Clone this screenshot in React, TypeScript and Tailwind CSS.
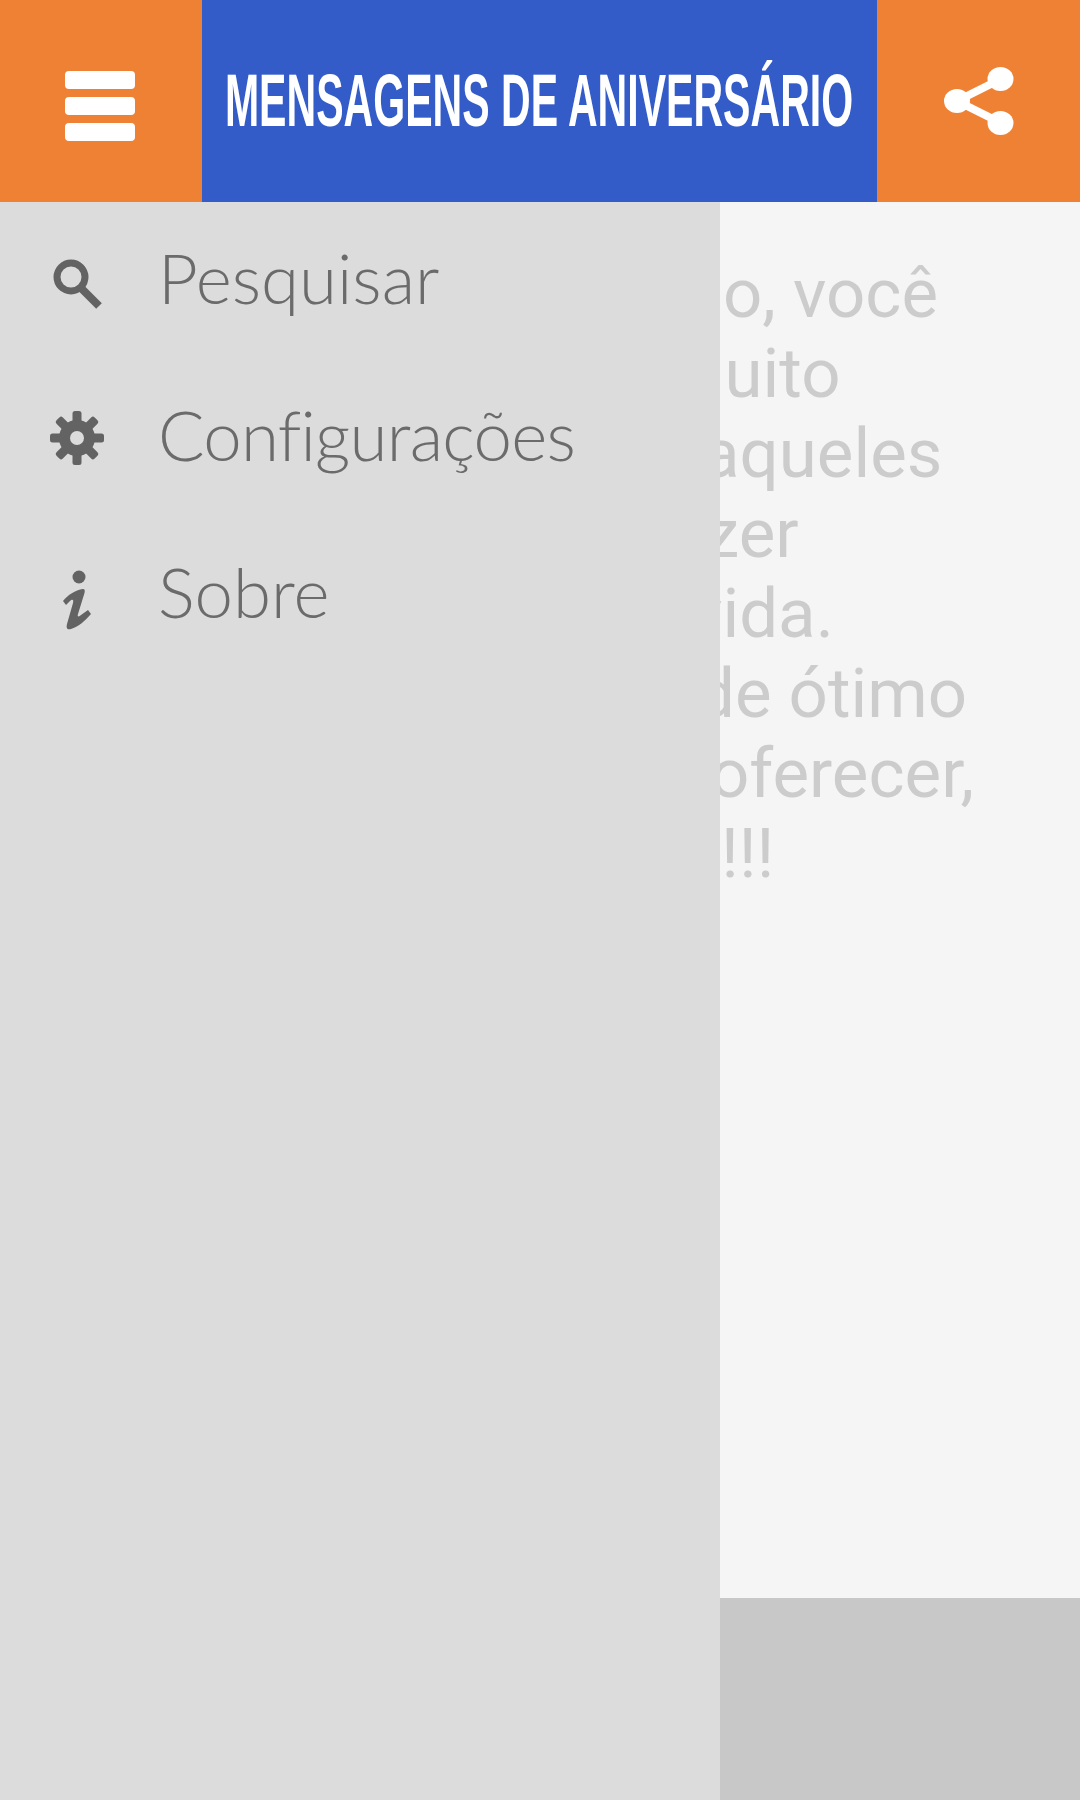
import React from 'react';

const messageLines = [
  { text: 'o, você', className: 'ml-[3px]' },
  { text: 'muito', className: 'ml-[-56px]' },
  { text: 'aqueles', className: 'ml-[-18px]' },
  { text: 'zer', className: 'ml-[-15px]' },
  { text: 'vida.', className: 'ml-[-31px]' },
  { text: 'de ótimo', className: 'ml-[-24px]' },
  { text: 'oferecer,', className: 'ml-[-10px]' },
  { text: '!!!', className: 'ml-[1px]' },
];

const MenuIcon = () => (
  <svg viewBox="0 0 70 70" className="w-[70px] h-[70px] mt-[10px] mr-[2px] fill-white">
    <rect x="0" y="0" width="70" height="18" rx="4" />
    <rect x="0" y="26" width="70" height="18" rx="4" />
    <rect x="0" y="52" width="70" height="18" rx="4" />
  </svg>
);

const ShareIcon = () => (
  <svg viewBox="0 0 70 68" className="w-[70px] h-[68px] fill-white stroke-white">
    <path d="M13 34 L57 12 M13 34 L57 56" strokeWidth="8" fill="none" />
    <ellipse cx="56.5" cy="12" rx="13" ry="12" stroke="none" />
    <ellipse cx="13" cy="34" rx="13" ry="12" stroke="none" />
    <ellipse cx="56.5" cy="56" rx="13" ry="12" stroke="none" />
  </svg>
);

const SearchIcon = () => (
  <svg viewBox="0 0 50 50" className="w-[50px] h-[50px] mt-[6px] ml-[2px]">
    <circle cx="18" cy="18" r="14" fill="none" stroke="#636363" strokeWidth="7" />
    <path d="M28 29 L46 47" stroke="#636363" strokeWidth="8" />
  </svg>
);

const GearIcon = () => (
  <svg viewBox="0 0 54 54" className="w-[54px] h-[54px]">
    {[0, 45, 90, 135].map((angle) => (
      <rect key={angle} x="22.5" y="0" width="9" height="54" rx="2.5" fill="#636363" transform={`rotate(${angle} 27 27)`} />
    ))}
    <circle cx="27" cy="27" r="18" fill="#636363" />
    <circle cx="27" cy="27" r="7" fill="#dcdcdc" />
  </svg>
);

const InfoIcon = () => (
  <svg viewBox="0 0 28 60" className="w-[28px] h-[60px] mt-[10px] fill-[#636363]">
    <circle cx="16" cy="7" r="6.5" />
    <path d="M0 31 C5 25 12 20 20 19 C22 19 22 21 21.5 23 L15 44 C14 47 16 47 18 45 L25 40 L28 44 C22 51 15 57 8 59 C4 60 3 58 4 54 L10 33 C11 29 9 29 7 31 L3 35 Z" />
  </svg>
);

const menuItems = [
  { label: 'Pesquisar', icon: <SearchIcon />, textClass: '' },
  { label: 'Configurações', icon: <GearIcon />, textClass: 'tracking-[-0.75px]' },
  { label: 'Sobre', icon: <InfoIcon />, textClass: '' },
];

export default function App() {
  return (
    <div className="relative flex flex-col w-[1080px] h-[1800px] overflow-hidden">
      <header className="flex h-[202px] shrink-0">
        <div className="flex items-center justify-center w-[202px] bg-[#ee8133]">
          <MenuIcon />
        </div>
        <div className="flex flex-1 items-center justify-center overflow-hidden bg-[#335cc9]">
          <h1 className="shrink-0 whitespace-nowrap scale-x-[0.555] text-[74px] leading-none font-bold text-white font-['Liberation_Sans',sans-serif]">
            MENSAGENS DE ANIVERSÁRIO
          </h1>
        </div>
        <div className="flex items-center justify-center w-[203px] bg-[#ee8133]">
          <ShareIcon />
        </div>
      </header>

      <main className="flex-1 bg-[#f5f5f5] pl-[720px] pt-[52px] overflow-hidden">
        {messageLines.map((line) => (
          <p
            key={line.text}
            className={`h-[80px] text-[69px] leading-[80px] whitespace-nowrap text-[#cccccc] font-['Roboto',sans-serif] ${line.className}`}
          >
            {line.text}
          </p>
        ))}
      </main>
      <div className="h-[202px] shrink-0 bg-[#c8c8c8]" />

      <nav className="absolute left-0 top-[202px] bottom-0 w-[720px] bg-[#dcdcdc]">
        {menuItems.map((item) => (
          <div key={item.label} className="flex items-center h-[157px]">
            <span className="flex items-center justify-center w-[154px] shrink-0">{item.icon}</span>
            <span className={`pl-[4px] -mt-[5px] text-[69px] font-light text-[#6b6b6b] font-['Lato',sans-serif] ${item.textClass}`}>{item.label}</span>
          </div>
        ))}
      </nav>
    </div>
  );
}
